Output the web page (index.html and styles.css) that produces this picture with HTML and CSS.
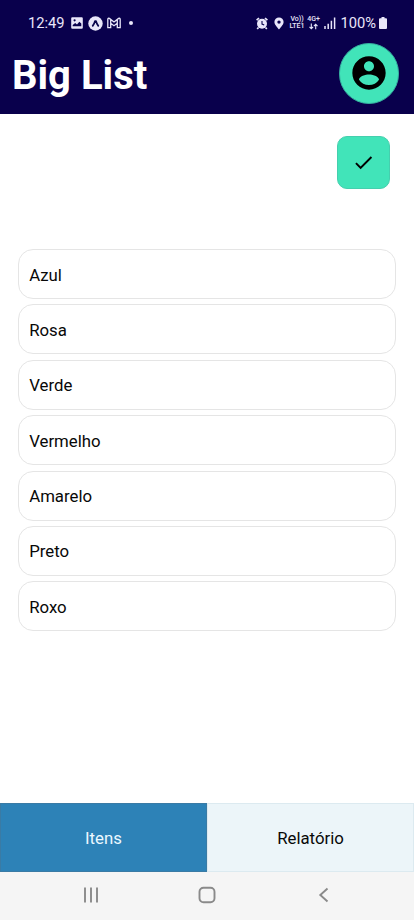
FILE: index.html
```
<!DOCTYPE html>
<html lang="pt-BR">
<head>
<meta charset="utf-8">
<meta name="viewport" content="width=device-width, initial-scale=1">
<title>Big List</title>
<link rel="stylesheet" href="styles.css">
</head>
<body>
<div class="screen">
  <header class="header">
    <div class="status">
      <div class="status-left">
        <span class="clock">12:49</span>
        <svg class="s-image" width="12" height="12" viewBox="0 0 12 12"><path fill="currentColor" fill-rule="evenodd" d="M1.300.2h9.400a1.100 1.100 0 0 1 1.100 1.100v9.400a1.100 1.100 0 0 1-1.100 1.100H1.300A1.100 1.100 0 0 1 .2 10.700V1.300A1.100 1.100 0 0 1 1.300.2zM1.700 9.200h8.600V6.500L8.300 4.800 6 7.400 4.200 5.900 1.700 8zM3.600 2.200a1.100 1.100 0 1 0 0 2.200 1.100 1.100 0 0 0 0-2.200z"/></svg>
        <svg class="s-expo" width="15" height="15" viewBox="0 0 15 15"><circle cx="7.5" cy="7.5" r="7.2" fill="currentColor"/><path d="M4.700 9.900Q6.300 8 7 5h1Q8.700 8 10.300 9.900" fill="none" stroke="#09044c" stroke-width="1.700" stroke-linecap="round" stroke-linejoin="round"/></svg>
        <svg class="s-mail" width="14" height="12" viewBox="0 0 14 12"><path d="M.8 10.700V2.400Q1 .9 2.400 1.400L7 5l4.600-3.600Q13 .9 13.200 2.400v8.300h-2.900V6.200L7 8.700 3.700 6.200v4.500zM3.700 2.700v3.500M10.300 2.700v3.500" fill="none" stroke="currentColor" stroke-width="1.300"/></svg>
        <i class="dot"></i>
      </div>
      <div class="status-right">
        <svg class="s-alarm" width="12" height="13" viewBox="0 0 12 13"><circle cx="6" cy="6.8" r="5" fill="currentColor"/><path d="M.6 3.200L3 1.100M11.400 3.200L9 1.100M2.500 10.500L1.200 12M9.500 10.500l1.300 1.500" stroke="currentColor" stroke-width="1.700"/><path d="M6 3.900v3.200l2.200 1" fill="none" stroke="#09044c" stroke-width="1.100"/></svg>
        <svg class="s-pin" width="10" height="13" viewBox="0 0 10 13"><path fill="currentColor" fill-rule="evenodd" d="M5 .5a4.600 4.600 0 0 1 4.600 4.600C9.600 8 5 12.500 5 12.500S.4 8 .4 5.100A4.600 4.600 0 0 1 5 .5zm0 2.900a1.700 1.700 0 1 0 0 3.400 1.700 1.700 0 0 0 0-3.400z"/></svg>
        <span class="volte"><span>Vo))</span><span>LTE1</span></span>
        <span class="network"><span>4G+</span><svg width="9" height="7" viewBox="0 0 9 7"><path d="M2.300.5v5M.5 3.800l1.800 1.900 1.800-1.900M6.700 6.200V1.300M4.900 3.100l1.800-1.900 1.800 1.900" fill="none" stroke="currentColor" stroke-width="1.100"/></svg></span>
        <svg class="s-signal" width="12" height="12" viewBox="0 0 12 12"><path d="M1 9v3M4.200 6.700V12M7.400 3.700V12M10.600.5V12" stroke="currentColor" stroke-width="1.500"/></svg>
        <span class="percent">100%</span>
        <svg class="s-battery" width="8" height="12" viewBox="0 0 8 12"><path fill="currentColor" d="M2.500 0h3v1.200H7a1 1 0 0 1 1 1V11a1 1 0 0 1-1 1H1a1 1 0 0 1-1-1V2.200a1 1 0 0 1 1-1h1.500z"/></svg>
      </div>
    </div>
    <div class="title-row">
      <h1>Big List</h1>
      <button class="avatar" aria-label="Perfil"><svg width="40" height="40" viewBox="0 0 24 24"><path d="M12 2C6.480 2 2 6.480 2 12s4.480 10 10 10 10-4.480 10-10S17.520 2 12 2zm0 3c1.660 0 3 1.340 3 3s-1.340 3-3 3-3-1.340-3-3 1.340-3 3-3zm0 14.200c-2.500 0-4.710-1.280-6-3.220.030-1.990 4-3.080 6-3.080 1.990 0 5.970 1.090 6 3.080-1.290 1.940-3.500 3.220-6 3.220z"/></svg></button>
    </div>
  </header>
  <main class="content">
    <button class="confirm" aria-label="Confirmar"><svg width="23" height="23" viewBox="0 0 24 24"><path d="M9 16.170L4.830 12l-1.420 1.410L9 19 21 7l-1.410-1.410z"/></svg></button>
    <ul class="list">
      <li>Azul</li>
      <li>Rosa</li>
      <li>Verde</li>
      <li>Vermelho</li>
      <li>Amarelo</li>
      <li>Preto</li>
      <li>Roxo</li>
    </ul>
  </main>
  <div class="tabs">
    <button class="tab active">Itens</button>
    <button class="tab">Relatório</button>
  </div>
  <nav class="system-nav">
    <svg width="16" height="16" viewBox="0 0 16 16"><path d="M2 .5v15M8 .5v15M14 .5v15"/></svg>
    <svg width="18" height="18" viewBox="0 0 18 18"><rect x="1.500" y="1.700" width="15" height="14.600" rx="4"/></svg>
    <svg width="16" height="16" viewBox="0 0 16 16"><path d="M12.500 1.500L5.300 8l7.200 6.500"/></svg>
  </nav>
</div>
</body>
</html>
```
FILE: styles.css
```
* { box-sizing: border-box; }

body {
  margin: 0;
  background: #fff;
  color: #080808;
  font-family: Roboto, "Liberation Sans", sans-serif;
}

button {
  padding: 0;
  font: inherit;
  color: inherit;
}

svg { display: block; flex: none; }

.screen {
  display: flex;
  flex-direction: column;
  height: 920px;
  overflow: hidden;
}

.header {
  height: 113.5px;
  flex: none;
  background: #09004c;
  color: #fff;
}

.status {
  display: flex;
  justify-content: space-between;
  height: 43px;
  padding: 3px 27.500px 0 28px;
  color: #e9e6fa;
}

.status-left,
.status-right {
  display: flex;
  align-items: center;
  height: 40px;
}

.clock { width: 43px; font-size: 14.700px; }
.s-expo { margin-left: 4.500px; }
.s-mail { margin-left: 4px; }

.dot {
  width: 4px;
  height: 4px;
  margin-left: 8px;
  border-radius: 50%;
  background: currentColor;
}

.s-pin { margin-left: 6px; }

.volte,
.network {
  display: flex;
  flex-direction: column;
  align-items: center;
  font-size: 7px;
  font-weight: 500;
  line-height: 7px;
}

.volte { width: 16px; margin-left: 5px; }
.network { width: 13px; margin-left: 2px; }
.s-signal { margin-left: 4px; }
.percent { width: 37px; margin-left: 4.500px; font-size: 14.700px; white-space: nowrap; }
.s-battery { margin-left: 1px; }

.title-row {
  display: flex;
  justify-content: space-between;
  padding: 0 15px 0 12px;
}

h1 {
  margin: 9px 0 0;
  font-size: 40px;
  font-weight: 700;
  line-height: 47px;
}

.avatar,
.confirm {
  display: flex;
  align-items: center;
  justify-content: center;
  border: 1px solid #45cfae;
  background: #41e4b9;
}

.avatar {
  width: 60.500px;
  height: 60.500px;
  border-radius: 50%;
  border-color: #35ad9f;
}

.content {
  display: flex;
  flex: 1;
  flex-direction: column;
  padding: 22.500px 18px 0;
}

.confirm {
  width: 52.500px;
  height: 52.500px;
  margin-right: 6.500px;
  align-self: flex-end;
  border-radius: 10px;
}

.list {
  display: flex;
  flex-direction: column;
  gap: 5.400px;
  margin: 60.500px 0 0;
  padding: 0;
  list-style: none;
}

.list li {
  height: 50px;
  padding: 1.500px 10.200px 0;
  border: 1px solid #e5e5e5;
  border-radius: 15px;
  font-size: 16.800px;
  line-height: 47px;
}

.tabs {
  display: flex;
  height: 69px;
  flex: none;
}

.tab {
  flex: 1;
  padding-top: 1px;
  border: 1px solid #dceaf0;
  background: #ecf5f9;
  font-size: 16.800px;
}

.tab.active {
  border-color: #3a7ba5;
  background: #2d82b7;
  color: #ebf8ff;
}

.system-nav {
  display: flex;
  align-items: center;
  justify-content: center;
  gap: 99px;
  height: 48px;
  flex: none;
  padding-bottom: 2px;
  background: #f5f5f5;
}

.system-nav svg {
  fill: none;
  stroke: #8a8a8a;
  stroke-width: 1.900;
}
```
